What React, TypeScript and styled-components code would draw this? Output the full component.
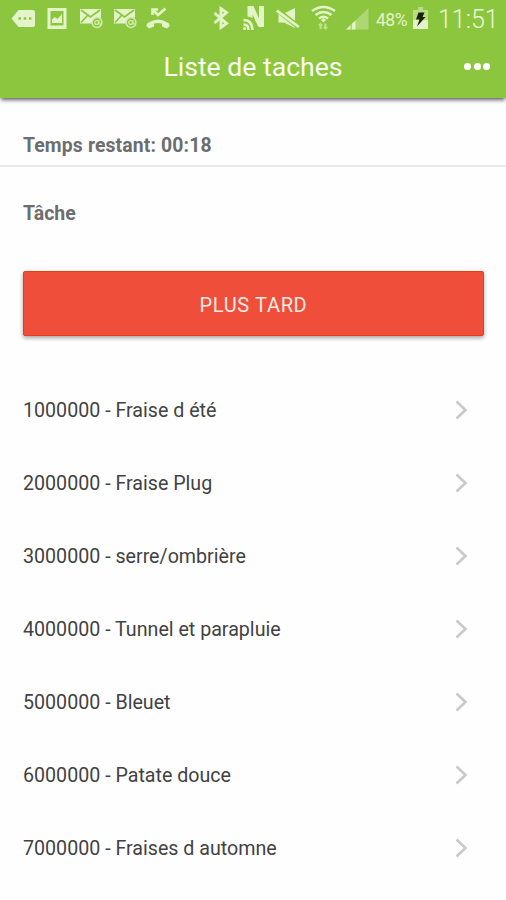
import React from "react";
import styled, { createGlobalStyle } from "styled-components";

const GlobalStyle = createGlobalStyle`
  * { box-sizing: border-box; }
  body {
    margin: 0;
    background: #fefefe;
    font-family: Roboto, "Liberation Sans", sans-serif;
  }
`;

const Screen = styled.main`
  width: 506px;
  height: 900px;
  overflow: hidden;
  background: #fefefe;
`;

const Header = styled.header`
  height: 98px;
  background: #8cc63f;
  color: #fbfff0;
  box-shadow: 0 3px 4px -1px rgba(60, 50, 70, 0.8);
`;

const StatusBar = styled.div`
  display: flex;
  align-items: flex-start;
  height: 38px;
  padding-left: 11px;
`;

const StatusIcon = styled.svg<{ $gap?: number }>`
  flex: none;
  display: block;
  margin-right: ${(p) => p.$gap ?? 0}px;
  fill: #e4f4c9;
`;

const BatteryLevel = styled.span`
  flex: none;
  width: 36px;
  font-size: 17.5px;
  line-height: 38px;
  letter-spacing: -0.5px;
  color: #e4f4c9;
  padding-top: 1px;
`;

const Clock = styled.time`
  flex: none;
  font-size: 25px;
  font-weight: 300;
  line-height: 38px;
  color: #edf9da;
  padding-top: 1px;
`;

const TitleBar = styled.div`
  display: grid;
  grid-template-columns: 60px 1fr 60px;
  align-items: center;
  height: 58px;
`;

const Title = styled.h1`
  grid-column: 2;
  margin: 0;
  font-size: 26.6px;
  font-weight: 400;
  line-height: 58px;
  text-align: center;
`;

const MenuButton = styled.button`
  display: flex;
  align-items: center;
  gap: 2.5px;
  padding: 0 0 1px 18px;
  border: 0;
  background: none;
`;

const Dot = styled.span`
  width: 7px;
  height: 7px;
  border-radius: 50%;
  background: #fff;
`;

const TimeLeft = styled.p`
  height: 69px;
  margin: 0;
  padding: 35px 23px 0;
  border-bottom: 2px solid #e8e8e8;
  font-size: 19.4px;
  font-weight: 700;
  line-height: 25px;
  letter-spacing: 0.13px;
  color: #6d6d6d;
`;

const SectionTitle = styled.h2`
  height: 104px;
  margin: 0;
  padding: 34px 23px 0;
  font-size: 19.4px;
  font-weight: 700;
  line-height: 25px;
  letter-spacing: 0.1px;
  color: #6d6d6d;
`;

const LaterButton = styled.button`
  display: block;
  width: 461px;
  height: 65px;
  margin: 0 0 0 23px;
  padding: 2px 0 0;
  border: 1px solid #ec3b16;
  border-radius: 2px;
  background: #ef4e3a;
  box-shadow: 0 2px 4px rgba(0, 0, 0, 0.36);
  color: #ffeae4;
  font: 400 20px Roboto, "Liberation Sans", sans-serif;
  letter-spacing: 0.65px;
`;

const TaskList = styled.ul`
  margin: 37px 0 0;
  padding: 0;
  list-style: none;
`;

const TaskRow = styled.li`
  display: flex;
  align-items: center;
  justify-content: space-between;
  height: 73.15px;
  padding: 0 38px 0 23px;
  font-size: 19.65px;
  color: #424242;
`;

const TaskName = styled.span`
  padding-top: 1px;
`;

const Chevron = styled.svg`
  flex: none;
  fill: none;
  stroke: #c9c9c9;
  stroke-width: 2.6;
`;

const tasks = [
  "1000000 - Fraise d été",
  "2000000 - Fraise Plug",
  "3000000 - serre/ombrière",
  "4000000 - Tunnel et parapluie",
  "5000000 - Bleuet",
  "6000000 - Patate douce",
  "7000000 - Fraises d automne",
];

const MailIcon = ({ gap }: { gap: number }) => (
  <StatusIcon $gap={gap} width="24" height="38" viewBox="0 0 24 38">
    <path d="M0 9h21v9a6.500 6.500 0 0 0-9 5.500H0z" />
    <path d="M1 10l9.500 7 9.500-7M1 22.500l6.500-7" fill="none" stroke="#8cc63f" strokeWidth="1.800" />
    <circle cx="17" cy="22.500" r="4.900" fill="none" stroke="#d3ecae" strokeWidth="1.500" />
    <circle cx="16.700" cy="22.500" r="1.900" fill="none" stroke="#d3ecae" strokeWidth="1.300" />
    <path d="M19 20v3.500q1 1.500 2.500-.5" fill="none" stroke="#d3ecae" strokeWidth="1.200" />
  </StatusIcon>
);

export default function App() {
  return (
    <Screen>
      <GlobalStyle />
      <Header>
        <StatusBar>
          <StatusIcon $gap={12} width="24" height="38" viewBox="0 0 24 38">
            <path d="M7.500 10H22q2 0 2 2v13q0 2-2 2H7.500L.5 18.500z" />
            <path d="M7.500 17.200h2.500v2.500h-2.500zM12.700 17.200h2.500v2.500h-2.500zM17.900 17.200h2.500v2.500h-2.500z" fill="#8cc63f" />
          </StatusIcon>
          <StatusIcon $gap={13} width="20" height="38" viewBox="0 0 20 38">
            <path d="M.5 8h19v21H.5zM3.500 11v14.500h13V11z" fillRule="evenodd" />
            <path d="M5 23v-3.500l3-2.500 2.500 2 4.500-5V23z" />
          </StatusIcon>
          <MailIcon gap={10} />
          <MailIcon gap={8} />
          <StatusIcon $gap={43} width="24" height="38" viewBox="0 0 24 38">
            <path d="M.8 26.500q-1-2 1-3.500Q12 16 22.200 23q2 1.500 1 3.500L21 28.500l-5-2v-3q-4-1-8 0v3l-5 2z" />
            <path d="M6.500 15V9.500H12M7 10l5 5 7.500-6.500" fill="none" stroke="#e4f4c9" strokeWidth="2.600" />
          </StatusIcon>
          <StatusIcon $gap={14} width="16" height="38" viewBox="0 0 16 38">
            <path d="M1.500 13l12 10.500-5.500 4V8.500l5.500 4L1.500 23" fill="none" stroke="#e4f4c9" strokeWidth="2.900" />
          </StatusIcon>
          <StatusIcon $gap={11} width="22" height="38" viewBox="0 0 22 38">
            <path d="M4.500 6h6l5.500 12.500V6H21v21h-5.500L9.500 14.500V18q-2.500-1.500-5-1.500z" />
            <path d="M.5 20q8.500 0 9 10M.5 24.500q5 0 5 5.500" fill="none" stroke="#e4f4c9" strokeWidth="2.500" />
            <circle cx="1.500" cy="28.500" r="1.500" />
          </StatusIcon>
          <StatusIcon $gap={11} width="24" height="38" viewBox="0 0 24 38">
            <path d="M2.500 13.500h5.500L19 8v20l-11-5.500H2.500z" />
            <path d="M0 9l24 19" stroke="#8cc63f" strokeWidth="5" />
            <path d="M.8 10.500l22 16.500" stroke="#e4f4c9" strokeWidth="2.800" />
          </StatusIcon>
          <StatusIcon $gap={9} width="25" height="38" viewBox="0 0 25 38">
            <path d="M1 11q11.500-8 23 0M4.500 15q8-6 16 0M8 18.500q4.500-3.500 9 0" fill="none" stroke="#e4f4c9" strokeWidth="2.300" />
            <path d="M12.500 18l2.500 2-2.500 2.500-2.500-2.500z" />
            <path d="M9.500 22.500l2.700 3h-1.500V29H8.500v-3.500H6.800zM14.500 30l-2.700-3h1.500v-3.500h2.200V27h1.700z" opacity=".6" />
          </StatusIcon>
          <StatusIcon $gap={7} width="24" height="38" viewBox="0 0 24 38">
            <path d="M23.500 8v21.500H1z" opacity=".38" />
            <path d="M5.500 25.200v4.300H1zM7 23.800l3.500-3.400v9.100H7z" />
          </StatusIcon>
          <BatteryLevel>48%</BatteryLevel>
          <StatusIcon $gap={9} width="17" height="38" viewBox="0 0 17 38">
            <path d="M6 7h5v3h5v10H1V10h5z" opacity=".5" />
            <path d="M1 20h15v9H1z" />
            <path d="M6.500 12.500h6L10.500 17h3L5 26.500l2.500-7H4z" fill="#182006" />
          </StatusIcon>
          <Clock>11:51</Clock>
        </StatusBar>
        <TitleBar>
          <Title>Liste de taches</Title>
          <MenuButton aria-label="Menu">
            <Dot />
            <Dot />
            <Dot />
          </MenuButton>
        </TitleBar>
      </Header>
      <TimeLeft>Temps restant: 00:18</TimeLeft>
      <SectionTitle>Tâche</SectionTitle>
      <LaterButton>PLUS TARD</LaterButton>
      <TaskList>
        {tasks.map((task) => (
          <TaskRow key={task}>
            <TaskName>{task}</TaskName>
            <Chevron width="13" height="20" viewBox="0 0 13 20">
              <path d="M1.500 1.500L10.500 10l-9 8.500" />
            </Chevron>
          </TaskRow>
        ))}
      </TaskList>
    </Screen>
  );
}
